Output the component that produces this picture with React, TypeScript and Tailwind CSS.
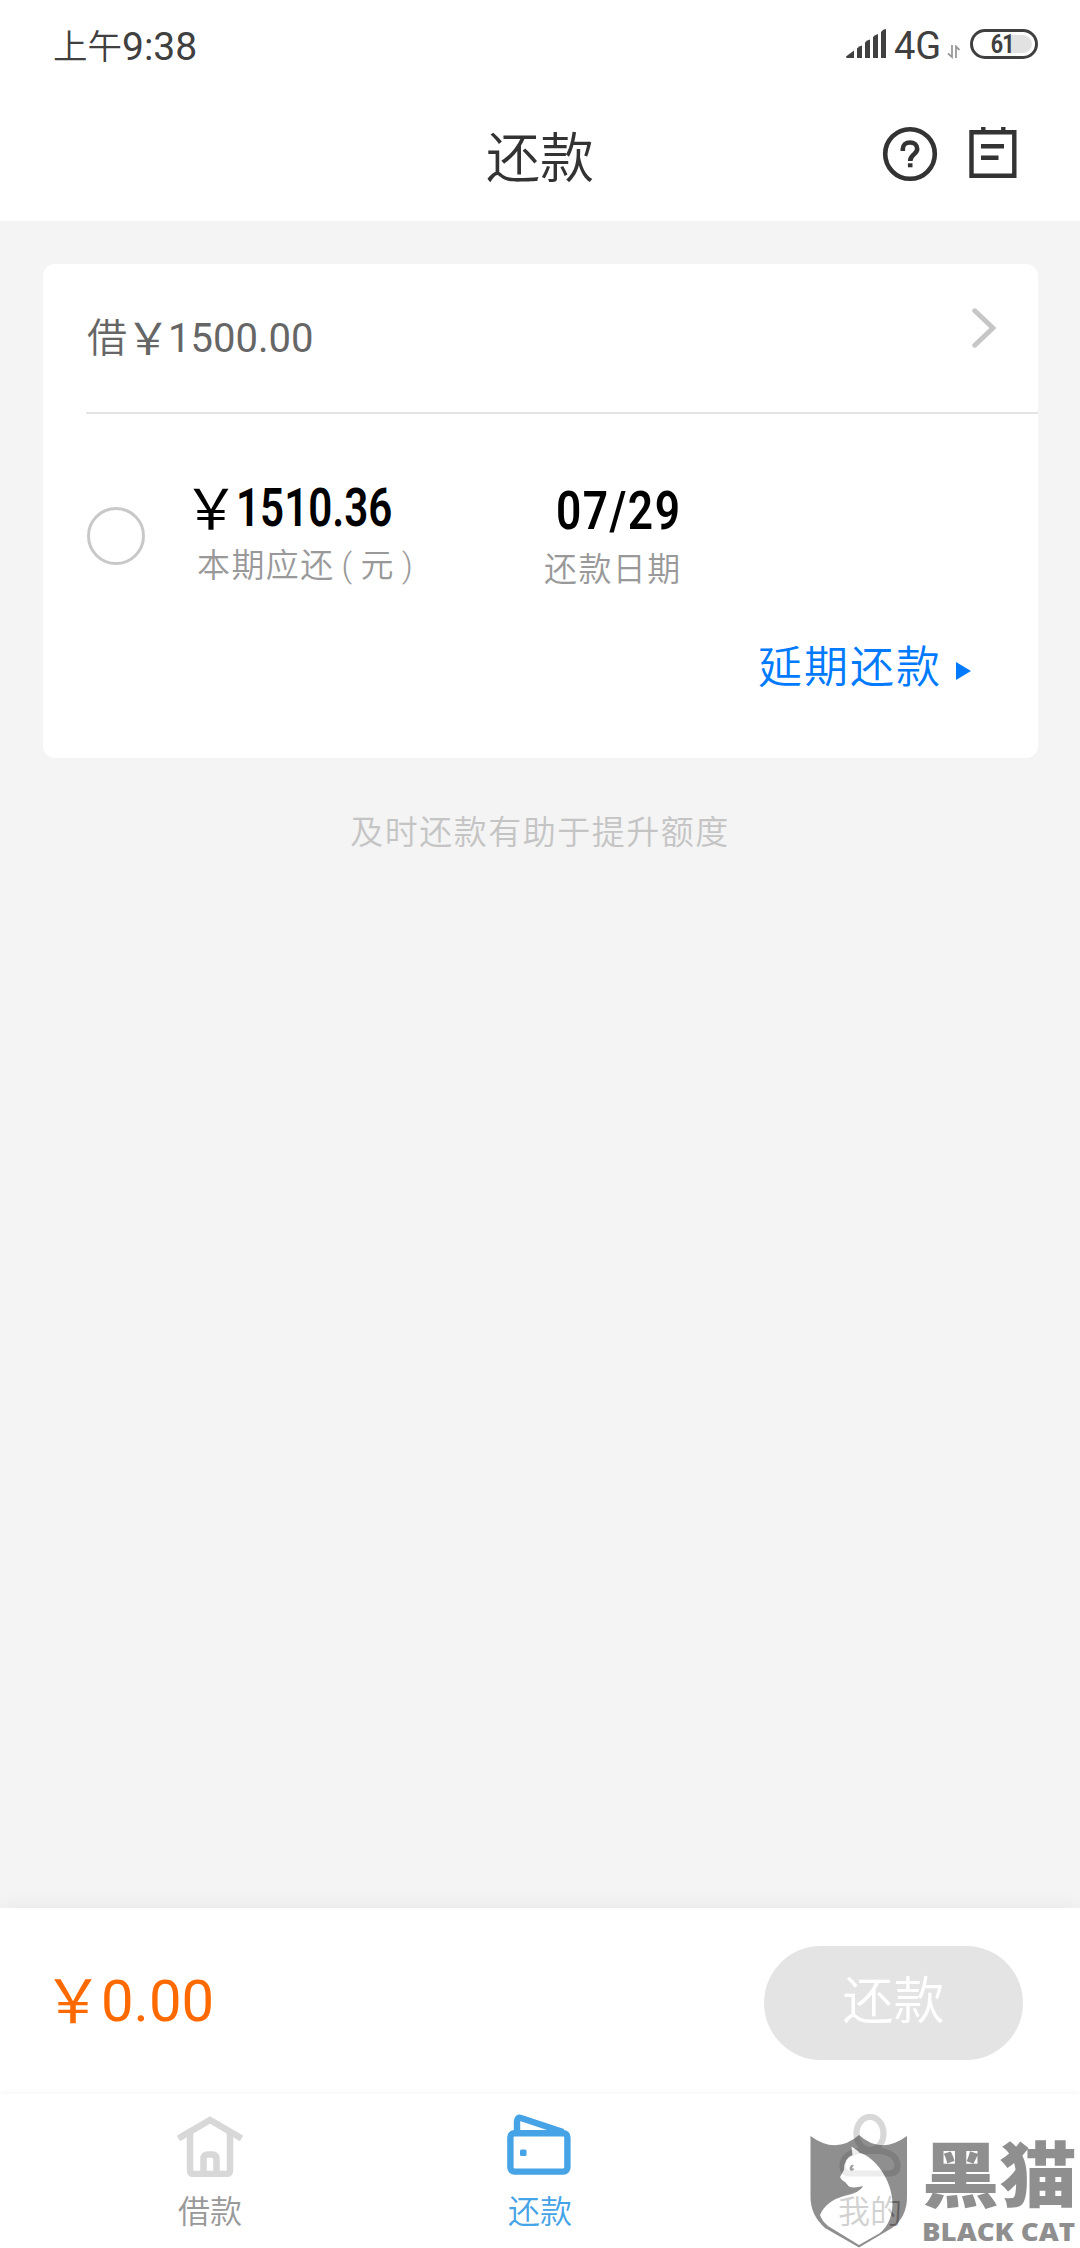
import React from 'react';

const SignalIcon = () => (
  <svg width="41" height="30" viewBox="0 0 41 30" fill="#404040">
    <path d="M0 27.5L8 21.5V29H1.5Q0 29 0 27.5Z" />
    <path d="M11 19.5Q13 17 16 16.500V29H11Z" />
    <path d="M19 13.500Q21 11 24 10.500V29H19Z" />
    <path d="M27 8Q29 6 32 5V29H27Z" />
    <path d="M35 3Q37 0 40 0V29H35Z" />
  </svg>
);

const DataArrowsIcon = () => (
  <svg width="14" height="14" viewBox="0 0 14 14" stroke="#9a9a9a" strokeWidth="1.8" fill="none">
    <path d="M5 0V12L1 8.500" />
    <path d="M9 13V1.500L12.500 5" />
  </svg>
);

const HelpIcon = () => (
  <svg width="56" height="56" viewBox="0 0 56 56" fill="none" stroke="#333" strokeWidth="4.6">
    <circle cx="28" cy="28" r="24.800" />
    <path d="M20.800 25V23C20.800 18.700 23.800 16.500 28 16.500S35.200 19.200 35.200 23C35.200 28.500 28.200 28 28.200 35" />
    <path d="M28.200 37.300V41.300" />
  </svg>
);

const BillIcon = () => (
  <svg width="48" height="54" viewBox="0 0 48 54" fill="none" stroke="#333" strokeWidth="4.400">
    <path d="M2.500 6.200H45.300V49.800H2.500Z" />
    <path d="M14.300 1V6M34.300 1V6M12 20.200H35M12 31.800H29.500" />
  </svg>
);

const ChevronIcon = () => (
  <svg width="24" height="40" viewBox="0 0 24 40" fill="none" stroke="#c6c6c6" strokeWidth="5" strokeLinecap="round">
    <path d="M2.800 2.800L21 20L2.800 37.200" />
  </svg>
);

const HomeIcon = () => (
  <svg width="66" height="62" viewBox="0 -1 66 62" fill="none" stroke="#d8d8d8" strokeWidth="6.500">
    <path d="M1.500 22.500L33 4L64.500 22.500" />
    <path d="M13 17V54Q13 58 17 58H49Q53 58 53 54V17" />
    <path d="M26.500 58V43Q26.500 38.500 31 38.500H35Q39.500 38.500 39.500 43V58" />
  </svg>
);

const WalletIcon = () => (
  <svg className="mb-[2px] mr-[3px]" width="64" height="62" viewBox="0 0 64 62" fill="none" stroke="#45a3e6" strokeWidth="6.400">
    <rect x="3.400" y="19.200" width="57" height="38.400" rx="4" />
    <path d="M10 19V7.500Q10 3 14 4L56 18" />
    <rect x="13" y="35.500" width="6.500" height="6.500" rx="1.500" fill="#45a3e6" stroke="none" />
  </svg>
);

const UserIcon = () => (
  <svg width="62" height="64" viewBox="0 0 62 64" fill="none" stroke="#d8d8d8" strokeWidth="6.200">
    <ellipse cx="31" cy="19.500" rx="13.500" ry="16.500" />
    <path d="M20 37Q3.500 40 3.500 52Q3.500 59.500 12 59.500H50Q58.500 59.500 58.500 52Q58.500 40 42 37Z" />
  </svg>
);

const ShieldCat = () => (
  <svg width="98" height="113" viewBox="0 0 98 113">
    <path fill="#373536" d="M0.500 1Q26 20 49 0Q71 20 97 1V62Q97 82 82 93L49 112.500L15 93Q0.500 80 0.500 62Z" />
    <path fill="#fff" d="M41.500 11.500L48 16L49 17.500C64 21 83 45 82.500 70C82 84 76 93 70 98L49 110L18 91Q12 86 10 80Q16 66 34 61Q50 58 53 51Q44 53.500 39 51.500L35 47Q31 45 30 42L34 35Q34 23 42.500 20Z" />
    <path fill="#555" d="M39.500 34Q40 29 44 30L42 33L44.500 34Q43 36.500 40.500 35.500Z" />
  </svg>
);

const StatusBar = () => (
  <div className="flex h-[92px] items-start justify-between pl-[53px] pr-[42px] text-[#404040]">
    <div className="mt-[19px] flex text-[39px] leading-[56px]">
      <span className="text-[34.500px] font-[350]">上午</span>
      <span>9:38</span>
    </div>
    <div className="mt-[29px] flex items-start">
      <SignalIcon />
      <span className="ml-[7px] w-[53px] text-[38px] leading-[34px]">4G</span>
      <div className="mr-[9px] mt-4"><DataArrowsIcon /></div>
      <div className="relative flex h-[30px] w-[68px] items-center justify-center rounded-full border-[3.500px] border-[#404040]">
        <div className="absolute right-[3px] top-[3px] h-[18px] w-[24px] rounded-r-full bg-[#e2e2e2]"></div>
        <span className="relative -ml-1 scale-x-[0.86] text-[25px] font-bold leading-none tracking-[-1px]">61</span>
      </div>
    </div>
  </div>
);

const Header = () => (
  <div className="grid h-[129px] grid-cols-3 items-start">
    <div></div>
    <h1 className="mt-[29px] text-center text-[54px] font-[350] leading-[78px] text-[#333]">还款</h1>
    <div className="flex justify-end pr-[63px] pt-[34px]">
      <HelpIcon />
      <div className="ml-[31px]"><BillIcon /></div>
    </div>
  </div>
);

const LoanCard = () => (
  <div className="ml-[43px] mr-[42px] mt-[43px] h-[494px] rounded-xl bg-white">
    <div className="ml-[43px] flex h-[150px] items-start justify-between border-b-2 border-[#e4e4e4] pr-[42px]">
      <p className="mt-[45px] flex pl-px text-[40px] leading-[60px] text-[#666]">
        <span className="w-[39px] font-[350]">借</span>
        <span className="w-[42px] pt-px text-[44px]">￥</span>
        <span>1500.00</span>
      </p>
      <div className="mt-[44px]"><ChevronIcon /></div>
    </div>
    <div className="flex pl-[44px]">
      <div className="mt-[93px] h-[58px] w-[58px] rounded-full border-[3px] border-[#c8c8c8]"></div>
      <div className="ml-[38px] mt-[62px] w-[268px]">
        <div className="flex h-[64px] items-center whitespace-nowrap text-black">
          <span className="w-[53px] pt-[3px] text-[56px] leading-[64px]">￥</span>
          <span className="inline-block origin-left scale-x-[0.78] text-[54px] font-semibold leading-[64px]">1510.36</span>
        </div>
        <p className="mt-[2px] flex pl-[14px] text-[33px] font-[350] leading-[48px] tracking-[1.400px] text-[#999]">
          本期应还<span className="ml-[7px]">(</span><span className="ml-[7px]">元</span><span className="ml-[7px]">)</span>
        </p>
      </div>
      <div className="ml-[93px] mt-[65px] w-[140px]">
        <div className="h-[64px] pl-[12px] text-black">
          <span className="inline-block origin-left scale-x-[0.82] text-[54px] font-semibold leading-[64px] tracking-[1.800px]">07/29</span>
        </div>
        <p className="mt-[3px] whitespace-nowrap text-[33px] font-[350] leading-[48px] tracking-[1.400px] text-[#999]">还款日期</p>
      </div>
    </div>
    <div className="mt-[42px] flex items-center justify-end pr-[67px] text-[#007aff]">
      <span className="text-[44px] font-[350] leading-[64px] tracking-[2px]">延期还款</span>
      <svg className="ml-[14px] mt-1.5" width="15" height="18" viewBox="0 0 15 18" fill="#007aff">
        <path d="M0 0L15 9L0 18Z" />
      </svg>
    </div>
  </div>
);

const PayBar = () => (
  <div className="flex h-[186px] items-start justify-between bg-white pl-[43px] pr-[57px] shadow-[0_-2px_18px_rgba(0,0,0,0.05)]">
    <div className="mt-[53px] flex text-[58px] leading-[80px] text-[#ff6a00]">
      <span className="w-[58px] pt-[2px] text-[60px]">￥</span>
      <span>0.00</span>
    </div>
    <button className="mt-[38px] h-[114px] w-[259px] rounded-full bg-[#e4e4e4] pb-[2px] text-[51px] font-[350] leading-[76px] text-white">
      还款
    </button>
  </div>
);

const tabs = [
  { label: '借款', icon: <HomeIcon />, color: 'text-[#999]' },
  { label: '还款', icon: <WalletIcon />, color: 'text-[#45a3e6]' },
  { label: '我的', icon: <UserIcon />, color: 'text-[#999]' },
];

const TabBar = () => (
  <div className="relative grid h-[154px] grid-cols-3 bg-white px-[45px] shadow-[0_-1px_5px_rgba(0,0,0,0.05)]">
    {tabs.map((tab) => (
      <div key={tab.label} className="flex flex-col items-center">
        <div className="mt-[19px] flex h-[66px] items-center">{tab.icon}</div>
        <span className={`mt-[10px] text-[32px] font-[350] leading-[46px] ${tab.color}`}>{tab.label}</span>
      </div>
    ))}
  </div>
);

const Watermark = () => (
  <div className="absolute bottom-0 right-0 flex h-[113px] w-[270px] text-[#373536] opacity-55">
    <ShieldCat />
    <div className="ml-[14px] w-[157px] whitespace-nowrap">
      <div className="inline-block h-[84px] origin-left scale-x-[1.09] text-[71px] font-black leading-[84px]">黑猫</div>
      <div className="origin-left scale-x-[1.15] font-['Open_Sans'] text-[24px] font-extrabold leading-[26px]">BLACK CAT</div>
    </div>
  </div>
);

const App: React.FC = () => {
  return (
    <div className="relative flex h-[2248px] w-[1080px] flex-col overflow-hidden bg-[#f4f4f4] font-[Roboto,'Noto_Sans_CJK_SC',sans-serif]">
      <div className="bg-white">
        <StatusBar />
        <Header />
      </div>
      <div className="flex-1">
        <LoanCard />
        <p className="mt-[51px] text-center text-[33px] font-[350] leading-[48px] tracking-[1.500px] text-[#c4c4c4]">
          及时还款有助于提升额度
        </p>
      </div>
      <PayBar />
      <TabBar />
      <Watermark />
    </div>
  );
};

export default App;
